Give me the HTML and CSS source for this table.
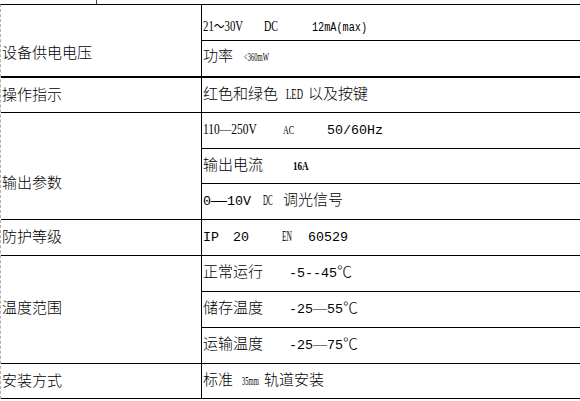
FILE: index.html
```html
<!DOCTYPE html>
<html lang="zh-CN">
<head>
<meta charset="utf-8">
<title>参数表</title>
<link rel="stylesheet" href="styles.css">
</head>
<body>
<div class="sheet">
  <div class="tick-row"><span class="tick"></span></div>
  <div class="spec">
    <div class="k k-power"><span class="ln">设备供电电压</span></div>
    <div class="v v-first"><span class="ln"><span class="cw w40"><span class="c s14 x77">21～30V</span></span><span class="cw w14 ml21"><span class="c s14 x72">DC</span></span><span class="cw w55 ml34"><span class="c cm x85">12mA(max)</span></span></span></div>
    <div class="v v-thick"><span class="ln">功率<span class="cw w25 ml11"><span class="c s12 x55">&lt;360mW</span></span></span></div>

    <div class="k"><span class="ln">操作指示</span></div>
    <div class="v"><span class="ln">红色和绿色<span class="cw w17 ml8"><span class="c s15 x58">LED</span></span><span class="ml5">以及按键</span></span></div>

    <div class="k k-out"><span class="ln">输出参数</span></div>
    <div class="v"><span class="ln"><span class="cw w54"><span class="c s14 x82">110—250V</span></span><span class="cw w12 ml26"><span class="c s13 x62">AC</span></span><span class="mono ml32">50/60Hz</span></span></div>
    <div class="v"><span class="ln">输出电流<span class="cw w16 ml30"><span class="c s13 b x70">16A</span></span></span></div>
    <div class="v"><span class="ln"><span class="mono">0——10V</span><span class="cw w10 ml12"><span class="c s14 x50">DC</span></span><span class="ml10">调光信号</span></span></div>

    <div class="k"><span class="ln">防护等级</span></div>
    <div class="v"><span class="ln"><span class="mono">IP</span><span class="mono ml14">20</span><span class="cw w10 ml33"><span class="c s15 x50">EN</span></span><span class="mono ml16">60529</span></span></div>

    <div class="k k-temp"><span class="ln">温度范围</span></div>
    <div class="v"><span class="ln">正常运行<span class="mono ml26">-5--45</span>℃</span></div>
    <div class="v"><span class="ln">储存温度<span class="mono ml26">-25</span><span class="dash">—</span><span class="mono">55</span>℃</span></div>
    <div class="v"><span class="ln">运输温度<span class="mono ml26">-25</span><span class="dash">—</span><span class="mono">75</span>℃</span></div>

    <div class="k"><span class="ln">安装方式</span></div>
    <div class="v"><span class="ln">标准<span class="cw w17 ml9"><span class="c s12 x55">35mm</span></span><span class="ml5">轨道安装</span></span></div>
  </div>
</div>
</body>
</html>
```

FILE: styles.css
```css
html, body {
  margin: 0;
  padding: 0;
  background: #fff;
  overflow: hidden;
}

.sheet {
  width: 640px;
  color: #000;
  font-family: "Noto Sans CJK SC", "Noto Sans", sans-serif;
  font-weight: 300;
  font-size: 15px;
  line-height: 1;
}

.tick-row {
  height: 4px;
  display: flex;
}

.tick {
  width: 1px;
  height: 4px;
  margin-left: 96px;
  background: #444;
}

.spec {
  display: grid;
  grid-template-columns: 201px 1fr;
  grid-template-rows: 36px 37px 35px 36px 35px 36px 36px 36px 36px 36px 35px;
  border-top: 1px solid #000;
  border-left: 1px dashed #b0b0b0;
}

.k, .v {
  box-sizing: border-box;
  display: flex;
  align-items: center;
  padding-bottom: 4px;
  border-bottom: 1px solid #000;
  white-space: nowrap;
}

.ln {
  display: block;
  white-space: nowrap;
}

.k {
  grid-column: 1;
  padding-left: 1px;
  border-right: 1px solid #000;
}

.v {
  grid-column: 2;
  padding-left: 1px;
}

.v-first {
  padding-top: 6px;
  padding-bottom: 0;
}

.k-power {
  grid-row: span 2;
  padding-top: 22px;
  padding-bottom: 0;
  border-bottom-width: 2px;
}

.v-thick {
  padding-bottom: 7px;
  border-bottom-width: 2px;
}

.k-out {
  grid-row: span 3;
  padding-top: 31px;
  padding-bottom: 0;
}

.k-temp {
  grid-row: span 3;
  padding-bottom: 6px;
}

/* condensed serif tokens */
.cw {
  display: inline-block;
  white-space: nowrap;
}

.c {
  display: inline-block;
  font-family: "Liberation Serif", "Noto Sans CJK SC", serif;
  font-weight: normal;
  transform-origin: 0 50%;
}

.cm {
  font-family: "Liberation Mono", monospace;
  font-size: 12px;
}

.s15 { font-size: 15px; }
.s14 { font-size: 14px; }
.s13 { font-size: 13px; }
.s12 { font-size: 12px; }
.b { font-weight: bold; }

.x50 { transform: scaleX(0.5); }
.x55 { transform: scaleX(0.55); }
.x58 { transform: scaleX(0.58); }
.x62 { transform: scaleX(0.62); }
.x70 { transform: scaleX(0.7); }
.x72 { transform: scaleX(0.72); }
.x77 { transform: scaleX(0.77); }
.x82 { transform: scaleX(0.82); }
.x85 { transform: scaleX(0.85); }

.w10 { width: 10px; }
.w12 { width: 12px; }
.w14 { width: 14px; }
.w16 { width: 16px; }
.w17 { width: 17px; }
.w25 { width: 25px; }
.w40 { width: 40px; }
.w54 { width: 54px; }
.w55 { width: 55px; }

.mono {
  font-family: "Liberation Mono", monospace;
  font-weight: normal;
  font-size: 13.33px;
}

.dash {
  font-family: "Liberation Serif", serif;
  font-weight: normal;
  font-size: 14px;
}

.ml5 { margin-left: 5px; }
.ml8 { margin-left: 8px; }
.ml9 { margin-left: 9px; }
.ml10 { margin-left: 10px; }
.ml11 { margin-left: 11px; }
.ml12 { margin-left: 12px; }
.ml14 { margin-left: 14px; }
.ml16 { margin-left: 16px; }
.ml21 { margin-left: 21px; }
.ml26 { margin-left: 26px; }
.ml30 { margin-left: 30px; }
.ml32 { margin-left: 32px; }
.ml33 { margin-left: 33px; }
.ml34 { margin-left: 34px; }
```
